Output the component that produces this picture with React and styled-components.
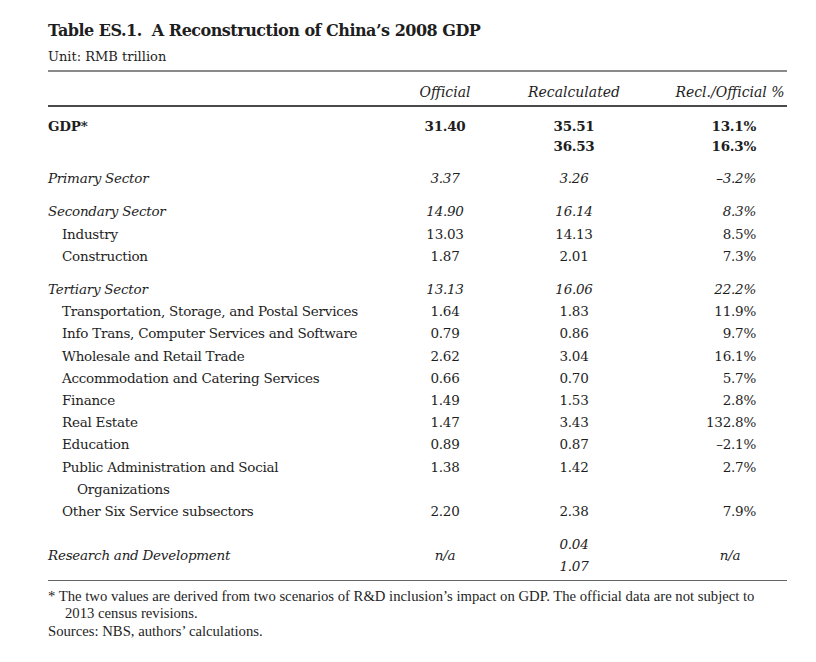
import React from 'react';
import styled, { createGlobalStyle } from 'styled-components';

const Global = createGlobalStyle`
  body {
    margin: 0;
    background: #fff;
    color: #1e1e1e;
    font-family: "DejaVu Serif", "Liberation Serif", serif;
  }
`;

const Page = styled.div`
  padding: 18px 29px 0 48px;
  width: 739px;
`;

const Title = styled.h1`
  margin: 0;
  font-size: 16px;
  line-height: 26px;
  font-weight: bold;
  letter-spacing: -0.5px;
`;

const Unit = styled.div`
  font-size: 13px;
  line-height: 20px;
  margin-top: 3px;
`;

const TopRule = styled.div`
  height: 2px;
  background: #8a8a8a;
  margin-top: 3px;
`;

const Rule = styled.div`
  height: ${p => p.thick ? 2 : 1}px;
  background: ${p => p.color || '#555'};
`;

const Row = styled.div`
  display: grid;
  grid-template-columns: 1fr 110px 148px 139px;
  align-items: ${p => p.center ? 'center' : 'start'};
  font-size: 13.5px;
  letter-spacing: -0.25px;
  line-height: ${p => p.tight ? 20 : 22.2}px;
  margin-top: ${p => p.gap || 0}px;
  font-weight: ${p => p.bold ? 'bold' : 'normal'};
  font-style: ${p => p.italic ? 'italic' : 'normal'};
`;

const HeadRow = styled(Row)`
  font-style: italic;
  font-size: 14px;
  letter-spacing: 0;
  padding: 9px 0 2px;
`;

const Label = styled.div`
  padding-left: ${p => p.indent ? 29 : 15}px;
  padding-right: 24px;
  text-indent: -15px;
`;

const Num = styled.div`
  text-align: center;
`;

const Pct = styled.div`
  text-align: ${p => p.mid ? 'center' : 'right'};
  padding-left: ${p => p.mid ? 25 : 0}px;
  padding-right: ${p => p.mid ? 0 : 31}px;
`;

const Body = styled.div`
  padding: 9px 0 2px;
`;

const Notes = styled.div`
  font-family: "Liberation Serif", serif;
  font-size: 14.7px;
  line-height: 17.5px;
  padding: 7px 20px 0 0;
`;

const Note = styled.div`
  padding-left: ${p => p.hang ? 17 : 0}px;
  text-indent: ${p => p.hang ? -17 : 0}px;
`;

const sectors = [
  {
    name: 'Primary Sector', vals: ['3.37', '3.26', '–3.2%'], rows: []
  },
  {
    name: 'Secondary Sector', vals: ['14.90', '16.14', '8.3%'],
    rows: [
      ['Industry', '13.03', '14.13', '8.5%'],
      ['Construction', '1.87', '2.01', '7.3%'],
    ]
  },
  {
    name: 'Tertiary Sector', vals: ['13.13', '16.06', '22.2%'],
    rows: [
      ['Transportation, Storage, and Postal Services', '1.64', '1.83', '11.9%'],
      ['Info Trans, Computer Services and Software', '0.79', '0.86', '9.7%'],
      ['Wholesale and Retail Trade', '2.62', '3.04', '16.1%'],
      ['Accommodation and Catering Services', '0.66', '0.70', '5.7%'],
      ['Finance', '1.49', '1.53', '2.8%'],
      ['Real Estate', '1.47', '3.43', '132.8%'],
      ['Education', '0.89', '0.87', '–2.1%'],
      ['Public Administration and Social Organizations', '1.38', '1.42', '2.7%'],
      ['Other Six Service subsectors', '2.20', '2.38', '7.9%'],
    ]
  },
];

export default function App() {
  return (
    <Page>
      <Global />
      <Title>Table ES.1.&nbsp; A Reconstruction of China’s 2008 GDP</Title>
      <Unit>Unit: RMB trillion</Unit>
      <TopRule />
      <HeadRow>
        <div />
        <Num>Official</Num>
        <Num>Recalculated</Num>
        <Pct mid>Recl./Official %</Pct>
      </HeadRow>
      <Rule thick color="#4a4a4a" />
      <Body>
        <Row bold tight>
          <Label>GDP*</Label>
          <Num>31.40</Num>
          <Num>35.51<br />36.53</Num>
          <Pct>13.1%<br />16.3%</Pct>
        </Row>
        {sectors.map(s => (
          <React.Fragment key={s.name}>
            <Row italic gap={11}>
              <Label>{s.name}</Label>
              <Num>{s.vals[0]}</Num>
              <Num>{s.vals[1]}</Num>
              <Pct>{s.vals[2]}</Pct>
            </Row>
            {s.rows.map(r => (
              <Row key={r[0]}>
                <Label indent>{r[0]}</Label>
                <Num>{r[1]}</Num>
                <Num>{r[2]}</Num>
                <Pct>{r[3]}</Pct>
              </Row>
            ))}
          </React.Fragment>
        ))}
        <Row italic center gap={11}>
          <Label>Research and Development</Label>
          <Num>n/a</Num>
          <Num>0.04<br />1.07</Num>
          <Pct mid>n/a</Pct>
        </Row>
      </Body>
      <Rule color="#666" />
      <Notes>
        <Note hang>* The two values are derived from two scenarios of R&amp;D inclusion’s impact on GDP. The official data are not subject to 2013 census revisions.</Note>
        <Note>Sources: NBS, authors’ calculations.</Note>
      </Notes>
    </Page>
  );
}
